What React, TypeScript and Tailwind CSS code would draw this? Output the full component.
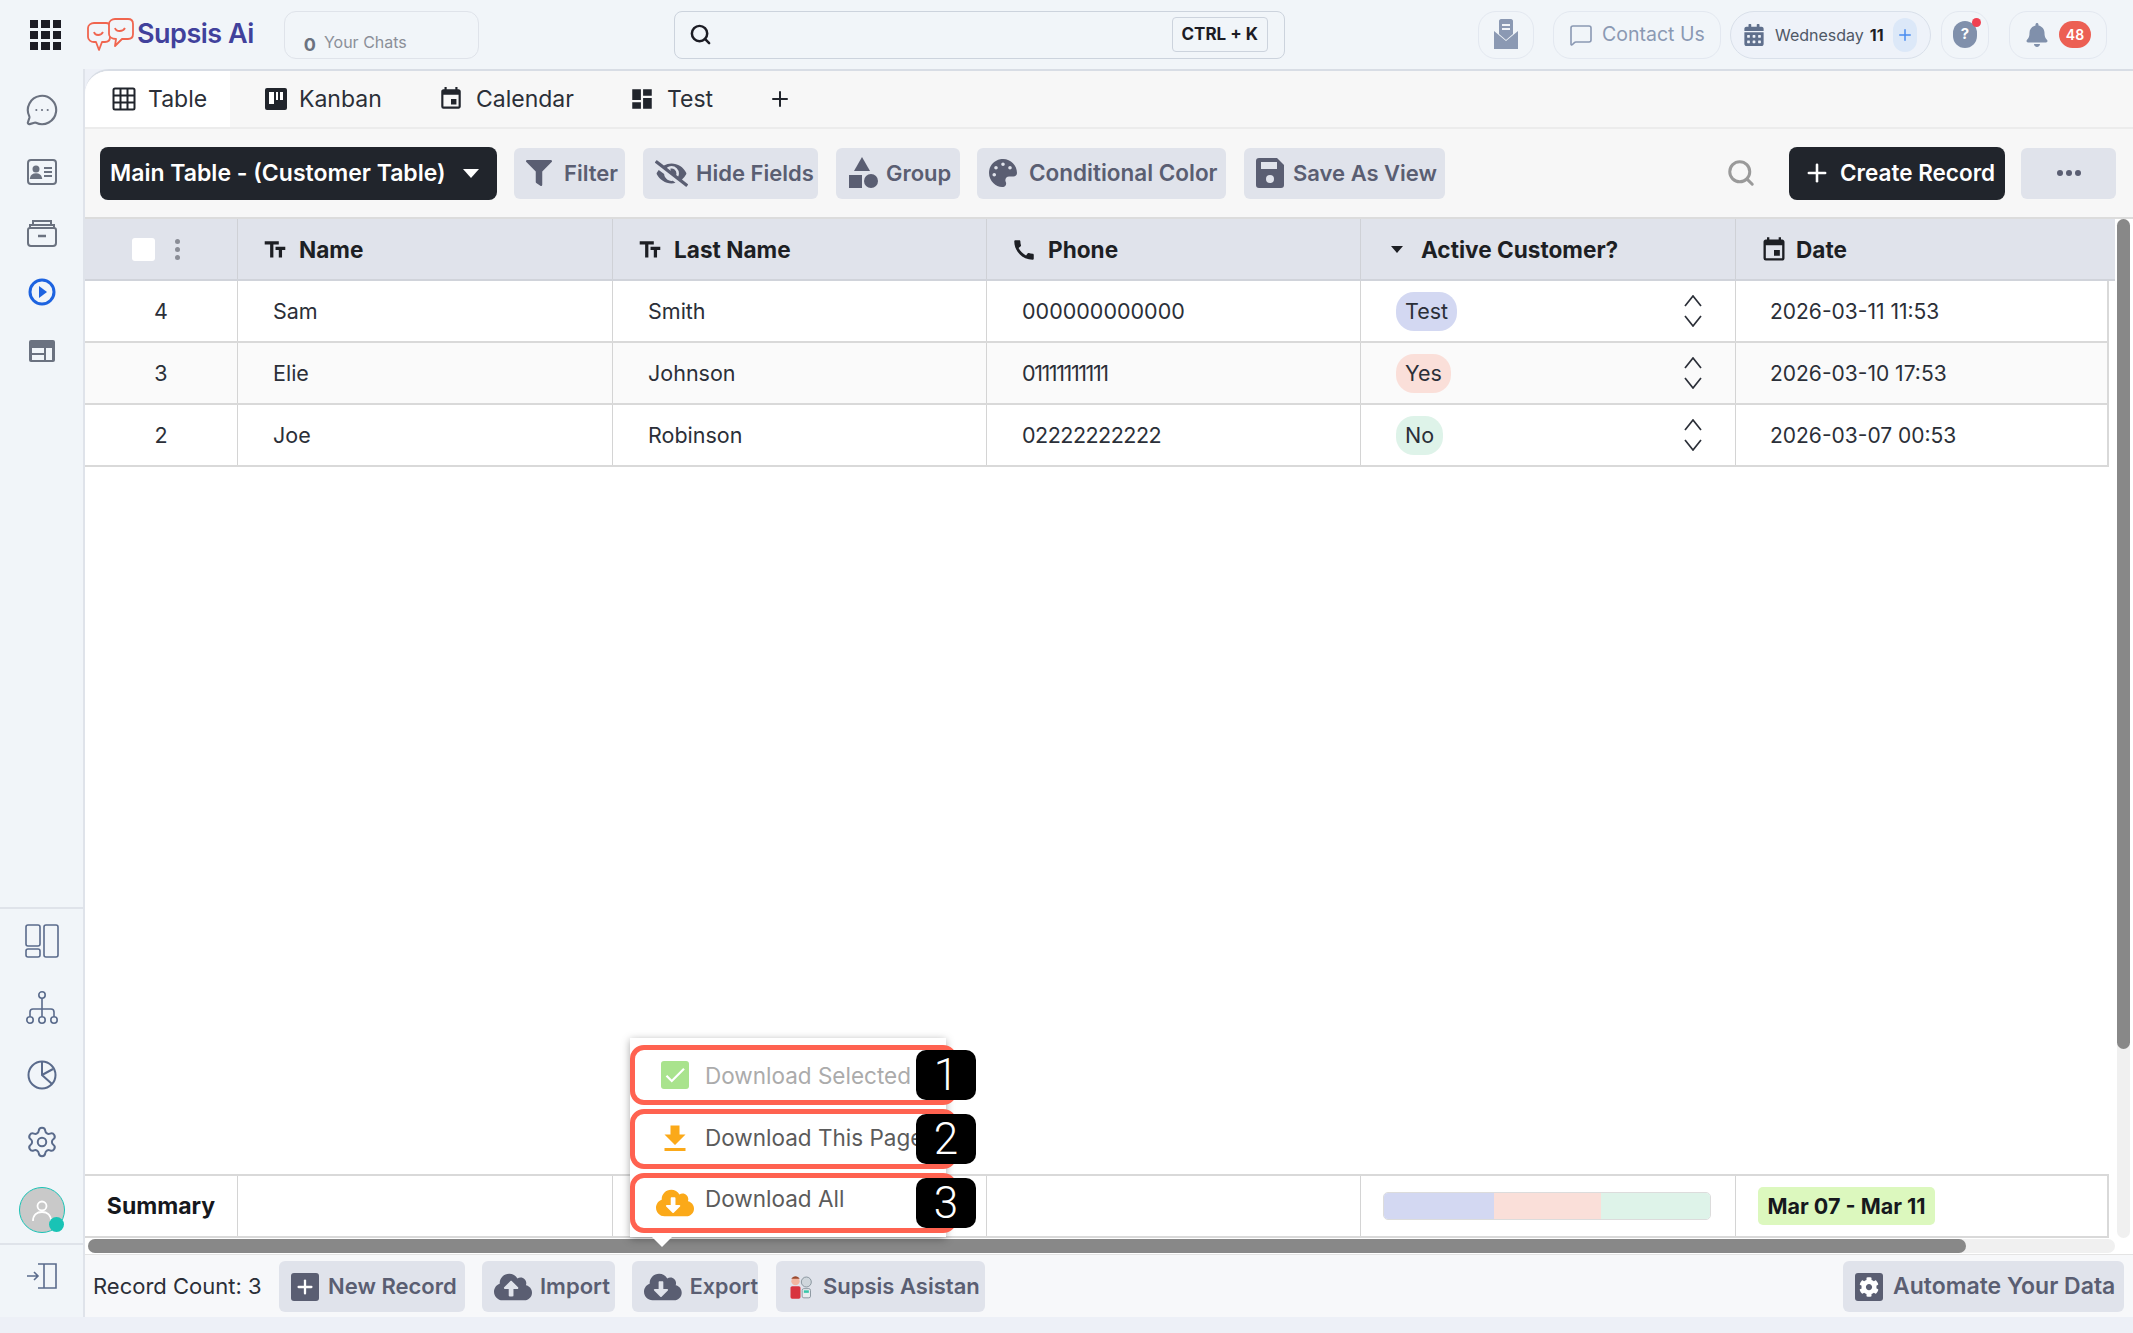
import type { ReactNode } from "react";
import { MessageCircleMore, MessageSquare, Plus, Search, Settings } from "lucide-react";
import { FaBell, FaCalendarAlt, FaCloudDownloadAlt, FaCloudUploadAlt, FaCog, FaEyeSlash, FaFilter, FaPalette } from "react-icons/fa";
import { MdCall, MdCheck, MdDashboard, MdEvent, MdFileDownload, MdTextFields } from "react-icons/md";

const font = "[font-family:Inter,'Liberation_Sans',sans-serif]";
const cols = "grid grid-cols-[152px_375px_374px_374px_375px_374px]";

function GridIcon() {
  const cells = [0, 1, 2, 3, 4, 5, 6, 7, 8];
  return (
    <div className="grid w-[31px] h-[30px] grid-cols-3 gap-[3px]">
      {cells.map((c) => (
        <div key={c} className="bg-[#1c1c24]" />
      ))}
    </div>
  );
}

function Logo() {
  return (
    <svg width="47" height="34" viewBox="0 0 47 34" fill="none" stroke="#f0654f" strokeWidth="1.8" strokeLinejoin="round">
      <path d="M7 5h12c3 0 4 2 4 4v10c0 3-2 5-5 5h-3l-3 8-3-8H7c-3 0-6-2-6-5V10c0-3 3-5 6-5z" />
      <path d="M28 1h13c3 0 5 2 5 5v10c0 3-2 5-5 5h-6l-7 7 1-7c-4 0-7-2-7-5V6c0-3 3-5 6-5z" fill="#f1f5f9" />
      <path d="M7 14c1 4 7 4 9 0M28 10c1 4 8 4 10 0" />
    </svg>
  );
}

function KanbanIcon() {
  return (
    <svg width="22" height="22" viewBox="0 0 22 22">
      <rect width="22" height="22" rx="2" fill="#21252c" />
      <rect x="4" y="4" width="5" height="12" fill="#fff" />
      <rect x="11" y="4" width="2" height="8" fill="#fff" />
      <rect x="15" y="4" width="3" height="8" fill="#fff" />
    </svg>
  );
}

function TableIcon() {
  return (
    <svg width="24" height="24" viewBox="0 0 24 24" fill="none" stroke="#21252c" strokeWidth="2">
      <rect x="1.5" y="1.5" width="21" height="21" rx="1.5" />
      <path d="M8.5 1.5v21M15.5 1.5v21M1.5 8.5h21M1.5 15.5h21" />
    </svg>
  );
}

function SortArrows() {
  return (
    <svg width="18" height="32" viewBox="0 0 18 32" fill="none" stroke="#2b2f38" strokeWidth="1.7">
      <path d="M1 11L9 1l8 10M1 21l8 10 8-10" />
    </svg>
  );
}

function Tab({ icon, label, className }: { icon: ReactNode; label: string; className: string }) {
  return (
    <div className={`flex h-full items-center gap-[12px] text-[23px] text-[#2b2f38] ${className}`}>
      {icon}
      <span>{label}</span>
    </div>
  );
}

function ToolButton({ icon, label, className, text = "text-[22px]" }: { icon: ReactNode; label: string; className: string; text?: string }) {
  return (
    <div className={`flex h-[51px] shrink-0 items-center gap-[8px] rounded-[6px] bg-[#e0e3eb] pl-[12px] font-semibold text-[#5a5e72] ${text} ${className}`}>
      {icon}
      <span className="whitespace-nowrap">{label}</span>
    </div>
  );
}

function HeadCell({ icon, label, className = "gap-[11px]" }: { icon: ReactNode; label: string; className?: string }) {
  return (
    <div className={`flex items-center border-l border-[#cfd1d6] pl-[24px] pt-[1px] text-[22.6px] font-bold text-[#1d1f24] ${className}`}>
      {icon}
      <span>{label}</span>
    </div>
  );
}

function Row({ id, first, last, phone, phoneClass, tag, tagBg, date, shade }: { id: number; first: string; last: string; phone: string; phoneClass: string; tag: string; tagBg: string; date: string; shade: string }) {
  const cell = "flex items-center border-l border-[#d4d4d4] pl-[35px]";
  return (
    <div className={`${cols} h-[62px] w-[2024px] border-b-2 border-r-2 border-[#d9d9d9] text-[21.5px] text-[#2b2f38] ${shade}`}>
      <div className="flex items-center justify-center">{id}</div>
      <div className={cell}>{first}</div>
      <div className={cell}>{last}</div>
      <div className={`${cell} ${phoneClass}`}>{phone}</div>
      <div className="flex items-center justify-between border-l border-[#d4d4d4] pl-[35px] pr-[33px]">
        <span className={`flex h-[39px] items-center rounded-[18px] px-[9px] ${tagBg}`}>{tag}</span>
        <SortArrows />
      </div>
      <div className="flex items-center border-l border-[#d4d4d4] pl-[34px] pt-[1px] text-[21px]">{date}</div>
    </div>
  );
}

function MenuBox({ num, icon, label, labelClass, muted }: { num: string; icon: ReactNode; label: string; labelClass: string; muted?: boolean }) {
  return (
    <div className="relative flex h-[60px] w-[327px] items-center rounded-[14px] border-[5px] border-[#ff6250] pl-[20px]">
      <span className="flex w-[40px] justify-center">{icon}</span>
      <span className={`ml-[10px] whitespace-nowrap text-[22.5px] ${labelClass} ${muted ? "text-[#ababab]" : "text-[#5b5b5b]"}`}>{label}</span>
      <span className="absolute left-[281px] top-[0px] flex h-[50px] w-[60px] items-center justify-center rounded-[10px] bg-black font-['Roboto',sans-serif] text-[44px] font-light text-white">{num}</span>
    </div>
  );
}

function Sidebar() {
  const stroke = { fill: "none", stroke: "#5a6b8c", strokeWidth: 1.6 };
  return (
    <aside className="flex w-[85px] shrink-0 flex-col items-center border-r-2 border-[#dfe3ea] bg-[#f1f5f9]">
      <div className="flex flex-col items-center pt-[24px] text-[#6b7280]">
        <MessageCircleMore size={34} strokeWidth={1.5} />
        <svg width="30" height="26" viewBox="0 0 30 26" fill="none" stroke="#6b7280" strokeWidth="2" className="mt-[32px]">
          <rect x="1" y="1" width="28" height="24" rx="3" />
          <circle cx="9" cy="10" r="2.5" fill="#6b7280" />
          <path d="M4 19c1-5 9-5 10 0z" fill="#6b7280" />
          <path d="M17 9h8M17 13h8M17 17h8" />
        </svg>
        <svg width="30" height="28" viewBox="0 0 30 28" fill="none" stroke="#6b7280" strokeWidth="2" className="mt-[34px]">
          <path d="M6 5V2h18v3M3 9V6h24v3M1 11c0-1 1-2 2-2h24c1 0 2 1 2 2v13c0 2-1 3-3 3H4c-2 0-3-1-3-3z" />
          <path d="M11 17h8" strokeWidth="2.5" />
        </svg>
        <svg width="28" height="28" viewBox="0 0 28 28" className="mt-[31px]">
          <circle cx="14" cy="14" r="12" fill="none" stroke="#1d63e0" strokeWidth="3" />
          <path d="M11 8l8 6-8 6z" fill="#1d63e0" />
        </svg>
        <svg width="26" height="22" viewBox="0 0 26 22" className="mt-[34px]">
          <rect width="26" height="22" rx="2" fill="#6b7280" />
          <rect x="3" y="8" width="12" height="5" fill="#f1f5f9" />
          <rect x="3" y="15" width="12" height="5" fill="#f1f5f9" />
          <rect x="17" y="8" width="6" height="12" fill="#f1f5f9" />
        </svg>
      </div>
      <div className="mt-auto flex w-full flex-col items-center border-t-2 border-[#dfe3ea] pt-[15px]">
        <div className="flex flex-col items-center gap-[33px]">
          <svg width="34" height="34" viewBox="0 0 34 34" {...stroke}>
            <rect x="1" y="1" width="14" height="21" rx="2" />
            <rect x="1" y="25" width="14" height="8" rx="2" />
            <rect x="19" y="1" width="14" height="32" rx="2" />
          </svg>
          <svg width="32" height="34" viewBox="0 0 32 34" {...stroke}>
            <circle cx="16" cy="4" r="3.2" />
            <circle cx="4" cy="29" r="3.2" />
            <circle cx="16" cy="29" r="3.2" />
            <circle cx="28" cy="29" r="3.2" />
            <path d="M16 7v18.8M4 25.8V21c0-2 1-3 3-3h18c2 0 3 1 3 3v4.8" />
          </svg>
          <svg width="34" height="34" viewBox="-2 -2 34 34" {...stroke} strokeWidth="2">
            <circle cx="15" cy="15" r="13.5" />
            <path d="M15 1.5V15l10 9M15 15l11-6" />
          </svg>
          <Settings size={34} strokeWidth={1.4} className="text-[#5a6b8c]" />
        </div>
        <div className="relative mt-[28px] flex h-[46px] w-[46px] items-center justify-center rounded-full border border-[#19c3b5] bg-[#c9c9c9]">
          <svg width="24" height="24" viewBox="0 0 24 24" fill="none" stroke="#fff" strokeWidth="1.8">
            <circle cx="12" cy="8" r="4.5" />
            <path d="M3 23c0-6 4-9 9-9s9 3 9 9" />
          </svg>
          <span className="absolute bottom-0 right-0 h-[15px] w-[15px] rounded-full bg-[#19c3b5]" />
        </div>
        <div className="mt-[10px] flex h-[74px] w-full items-start justify-center border-t-2 border-[#dfe3ea] pt-[18px]">
          <svg width="32" height="26" viewBox="0 0 32 26" {...stroke}>
            <path d="M1 13h11M8 9l4 4-4 4M12 1h6v24h-6M18 1h12v24H18" />
          </svg>
        </div>
      </div>
    </aside>
  );
}

function TopBar() {
  const pill = "flex h-[48px] items-center rounded-[18px] border border-[#e3e8f0]";
  return (
    <header className="flex h-[69px] shrink-0 items-center bg-[#f1f5f9] pl-[30px] pr-[26px]">
      <GridIcon />
      <div className="ml-[26px] flex items-center gap-[3px]">
        <Logo />
        <span className="text-[27px] font-semibold tracking-[-0.5px] text-[#41419c]">Supsis Ai</span>
      </div>
      <div className="ml-[30px] flex h-[48px] w-[195px] items-end gap-[8px] rounded-[12px] border border-[#dfe3ea] pb-[4px] pl-[19px]">
        <span className="text-[18px] font-bold leading-none text-[#6b7280]">0</span>
        <span className="pb-[4px] text-[16px] leading-none text-[#8b8f98]">Your Chats</span>
      </div>
      <div className="ml-[195px] flex h-[48px] w-[611px] items-center justify-between rounded-[8px] border border-[#ccd3dd] pl-[14px] pr-[16px]">
        <Search size={23} strokeWidth={2.6} className="text-[#1c1c24]" />
        <span className="flex h-[35px] w-[96px] items-center justify-center rounded-[4px] border border-[#ccd3dd] text-[17px] font-bold text-[#1c1c24]">CTRL + K</span>
      </div>
      <div className="ml-auto flex items-center">
        <div className={`${pill} w-[56px] justify-center`}>
          <svg width="26" height="32" viewBox="0 0 26 32">
            <path d="M1 12l12 10 12-10v18H1z" fill="#8b99b3" />
            <path d="M6 2c0-1 1-2 2-2h10c1 0 2 1 2 2v13l-7 6-7-6z" fill="#8b99b3" />
            <path d="M9 6h8M9 10h8" stroke="#f1f5f9" strokeWidth="2" />
          </svg>
        </div>
        <div className={`${pill} ml-[19px] w-[168px] gap-[9px] pl-[15px] text-[19.5px] text-[#8b99b3]`}>
          <MessageSquare size={24} strokeWidth={1.6} />
          <span>Contact Us</span>
        </div>
        <div className="ml-[9px] flex h-[48px] w-[201px] items-center rounded-[24px] border border-[#d9e0ea] bg-[#eef2f9] pl-[12px]">
          <FaCalendarAlt size={22} className="text-[#5f6f8c]" />
          <span className="ml-[10px] text-[16px] text-[#4f5866]">Wednesday</span>
          <span className="ml-[6px] text-[16px] font-bold text-[#1c1c24]">11</span>
          <span className="ml-[9px] flex h-[34px] w-[24px] items-center justify-center rounded-full bg-[#dce8f8]">
            <Plus size={18} className="text-[#4a8cf0]" />
          </span>
        </div>
        <div className={`${pill} relative ml-[10px] w-[48px] justify-center`}>
          <span className="flex h-[27px] w-[24px] items-center justify-center rounded-full bg-[#8090ab] text-[15px] font-bold text-white">?</span>
          <span className="absolute right-[7px] top-[6px] h-[9px] w-[9px] rounded-full bg-[#f04050]" />
        </div>
        <div className={`${pill} ml-[20px] w-[98px] justify-center gap-[10px]`}>
          <FaBell size={24} className="text-[#8090ab]" />
          <span className="flex h-[27px] w-[32px] items-center justify-center rounded-[14px] bg-[#ec5f53] text-[14px] font-semibold text-white">48</span>
        </div>
      </div>
    </header>
  );
}

export default function App() {
  return (
    <div className={`flex h-[1333px] w-[2133px] flex-col overflow-hidden bg-[#edf0f7] ${font}`}>
      <TopBar />
      <div className="flex h-[1248px] shrink-0">
        <Sidebar />
        <main className="flex min-w-0 flex-1 flex-col rounded-tl-[24px] border-t-2 border-[#d8dde5] bg-white">
          <div className="flex h-[58px] shrink-0 items-center rounded-tl-[24px] border-b-2 border-[#ececec] bg-[#f7f7f7]">
            <Tab icon={<TableIcon />} label="Table" className="w-[145px] rounded-tl-[24px] bg-white pl-[27px]" />
            <Tab icon={<KanbanIcon />} label="Kanban" className="w-[175px] pl-[35px]" />
            <Tab icon={<MdEvent size={26} color="#21252c" />} label="Calendar" className="w-[191px] pl-[33px] gap-[10px]" />
            <Tab icon={<MdDashboard size={26} color="#21252c" />} label="Test" className="w-[139px] pl-[33px] gap-[10px]" />
            <Plus size={24} strokeWidth={2} className="ml-[33px] text-[#21252c]" />
          </div>

          <div className="flex h-[90px] shrink-0 items-center border-b-2 border-[#dcdcdc] bg-[#f7f7f7] pl-[15px]">
            <div className="flex h-[53px] w-[397px] shrink-0 items-center justify-between rounded-[8px] bg-[#21252c] pl-[10px] pr-[18px] text-[23px] font-semibold text-white">
              <span className="whitespace-nowrap">Main Table - (Customer Table)</span>
              <svg width="16" height="9" viewBox="0 0 16 9"><path d="M0 0h16L8 9z" fill="#fff" /></svg>
            </div>
            <ToolButton icon={<FaFilter size={26} />} label="Filter" className="ml-[17px] w-[111px] gap-[12px]" />
            <ToolButton icon={<FaEyeSlash size={33} />} label="Hide Fields" className="ml-[18px] w-[175px] gap-[3px] pl-[7px]" />
            <ToolButton
              icon={
                <svg width="30" height="32" viewBox="0 0 30 32" fill="#5a5e72">
                  <path d="M14 0l8 14H6z" />
                  <rect x="1" y="18" width="13" height="13" />
                  <circle cx="23" cy="24" r="7" />
                </svg>
              }
              label="Group"
              className="ml-[18px] w-[124px] pl-[10px]"
            />
            <ToolButton icon={<FaPalette size={28} />} label="Conditional Color" className="ml-[17px] w-[249px] gap-[12px]" text="text-[22.5px]" />
            <ToolButton
              icon={
                <svg width="28" height="30" viewBox="0 0 28 30" fill="#5a5e72">
                  <path d="M3 0h18l7 7v20c0 2-1 3-3 3H3c-2 0-3-1-3-3V3c0-2 1-3 3-3z" />
                  <rect x="5" y="4" width="16" height="7" fill="#e0e3eb" />
                  <circle cx="14" cy="21" r="4" fill="#e0e3eb" />
                </svg>
              }
              label="Save As View"
              className="ml-[18px] w-[201px] gap-[9px]"
            />
            <Search size={30} strokeWidth={2.4} className="ml-[281px] text-[#9a9a9a]" />
            <div className="ml-[33px] flex h-[53px] w-[216px] shrink-0 items-center gap-[9px] rounded-[8px] bg-[#21252c] pl-[14px] text-[22.5px] font-semibold text-white">
              <Plus size={28} strokeWidth={2.2} />
              <span className="whitespace-nowrap">Create Record</span>
            </div>
            <div className="ml-[16px] flex h-[51px] w-[95px] shrink-0 items-center justify-center gap-[3px] rounded-[6px] bg-[#e0e3eb]">
              <span className="h-[6px] w-[6px] rounded-full bg-[#5a5e72]" />
              <span className="h-[6px] w-[6px] rounded-full bg-[#5a5e72]" />
              <span className="h-[6px] w-[6px] rounded-full bg-[#5a5e72]" />
            </div>
          </div>

          <div className="relative flex min-h-0 flex-1">
            <div className="flex w-[2032px] shrink-0 flex-col">
              <div className={`${cols} h-[62px] w-[2030px] shrink-0 border-b-2 border-[#d0d3da] bg-[#e0e3eb]`}>
                <div className="flex items-center pl-[47px]">
                  <span className="h-[23px] w-[23px] rounded-[3px] bg-white" />
                  <span className="ml-[20px] flex flex-col gap-[3px]">
                    <span className="h-[5px] w-[5px] rounded-full bg-[#8a8d96]" />
                    <span className="h-[5px] w-[5px] rounded-full bg-[#8a8d96]" />
                    <span className="h-[5px] w-[5px] rounded-full bg-[#8a8d96]" />
                  </span>
                </div>
                <HeadCell icon={<MdTextFields size={26} color="#1d1f24" />} label="Name" />
                <HeadCell icon={<MdTextFields size={26} color="#1d1f24" />} label="Last Name" />
                <HeadCell icon={<MdCall size={26} color="#1d1f24" />} label="Phone" />
                <HeadCell icon={<svg width="12" height="7" viewBox="0 0 12 7" className="ml-[6px] mr-[7px]"><path d="M0 0h12L6 7z" fill="#1d1f24" /></svg>} label="Active Customer?" />
                <HeadCell icon={<MdEvent size={28} color="#1d1f24" />} label="Date" className="gap-[8px]" />
              </div>
              <Row id={4} first="Sam" last="Smith" phone="000000000000" phoneClass="" tag="Test" tagBg="bg-[#d3d8f2]" date="2026-03-11 11:53" shade="bg-white" />
              <Row id={3} first="Elie" last="Johnson" phone="01111111111" phoneClass="tracking-[-1.4px]" tag="Yes" tagBg="bg-[#fadfd9]" date="2026-03-10 17:53" shade="bg-[#fafafa]" />
              <Row id={2} first="Joe" last="Robinson" phone="02222222222" phoneClass="tracking-[-0.5px]" tag="No" tagBg="bg-[#def3e9]" date="2026-03-07 00:53" shade="bg-white" />

              <div className={`${cols} mt-auto h-[64px] w-[2024px] shrink-0 border-y-2 border-r-2 border-[#d9d9d9]`}>
                <div className="flex items-center justify-center text-[23px] font-bold text-[#16181d]">Summary</div>
                <div className="border-l border-[#d4d4d4]" />
                <div className="border-l border-[#d4d4d4]" />
                <div className="border-l border-[#d4d4d4]" />
                <div className="flex items-center border-l border-[#d4d4d4] pl-[22px]">
                  <div className="flex h-[28px] w-[328px] overflow-hidden rounded-[5px] border border-[#dcdcdc]">
                    <span className="w-[110px] bg-[#d3d8f2]" />
                    <span className="w-[107px] bg-[#fadfd9]" />
                    <span className="flex-1 bg-[#def3e9]" />
                  </div>
                </div>
                <div className="flex items-center border-l border-[#d4d4d4] pl-[22px]">
                  <span className="flex h-[38px] w-[177px] items-center justify-center rounded-[5px] bg-[#dcf8be] text-[21.5px] font-bold text-[#16181d]">Mar 07 - Mar 11</span>
                </div>
              </div>
            </div>
            <div className="flex w-[13px] flex-col rounded-full bg-[#f0f0f0]">
              <div className="h-[830px] rounded-full bg-[#888]" />
            </div>
          </div>

          <div className="flex h-[17px] shrink-0 items-center border-b border-[#e4e4e4] pl-[3px] pr-[18px]">
            <div className="h-[14px] flex-1 rounded-full bg-[#f0f0f0]">
              <div className="h-[14px] w-[1878px] rounded-full bg-[#888]" />
            </div>
          </div>

          <div className="flex h-[62px] shrink-0 items-center bg-[#f7f8fa] pl-[8px] pr-[9px] pt-[1px] text-[#2b2f38]">
            <span className="w-[186px] whitespace-nowrap text-[22px]">Record Count: 3</span>
            <ToolButton
              icon={
                <span className="flex h-[28px] w-[28px] items-center justify-center rounded-[3px] bg-[#5a5e72]">
                  <Plus size={22} strokeWidth={2.5} className="text-white" />
                </span>
              }
              label="New Record"
              className="w-[186px] gap-[9px]"
            />
            <ToolButton icon={<FaCloudUploadAlt size={38} />} label="Import" className="ml-[17px] w-[133px] gap-[5px] pl-[2px]" />
            <ToolButton icon={<FaCloudDownloadAlt size={38} />} label="Export" className="ml-[17px] w-[126px] gap-[4px] pl-[2px]" text="text-[21.5px]" />
            <ToolButton
              icon={
                <svg width="25" height="30" viewBox="0 0 30 30">
                  <circle cx="9" cy="8" r="5" fill="#f2b6a0" />
                  <path d="M4 5c2-4 8-4 10 0z" fill="#9b4a2f" />
                  <rect x="3" y="14" width="12" height="15" rx="2" fill="#d8343f" />
                  <circle cx="22" cy="9" r="6" fill="#cfd6dc" stroke="#7d8a94" />
                  <rect x="17" y="17" width="10" height="11" rx="2" fill="#e8ecef" stroke="#7d8a94" />
                  <rect x="19" y="19" width="6" height="3" fill="#38c6a8" />
                </svg>
              }
              label="Supsis Asistan"
              className="ml-[18px] w-[209px] gap-[10px] pl-[5px]"
            />
            <ToolButton
              icon={
                <span className="flex h-[28px] w-[28px] items-center justify-center rounded-[3px] bg-[#5a5e72]">
                  <FaCog size={20} className="text-white" />
                </span>
              }
              label="Automate Your Data"
              className="ml-auto w-[281px] gap-[10px]"
              text="text-[23px]"
            />
          </div>
        </main>
      </div>

      <div className="absolute left-[630px] top-[1038px] flex h-[199px] w-[316px] flex-col gap-[4px] bg-white pt-[7px] shadow-[0_2px_8px_rgba(0,0,0,0.35)]">
        <MenuBox
          num="1"
          muted
          label="Download Selected"
          labelClass="pt-[1px]"
          icon={
            <span className="flex h-[28px] w-[28px] items-center justify-center rounded-[3px] bg-[#a9e38d]">
              <MdCheck size={26} className="text-white" />
            </span>
          }
        />
        <MenuBox num="2" label="Download This Page" labelClass="pb-[2px]" icon={<MdFileDownload size={36} className="text-[#fba919]" />} />
        <MenuBox num="3" label="Download All" labelClass="pb-[8px]" icon={<FaCloudDownloadAlt size={38} className="text-[#fba919]" />} />
        <span className="absolute left-[22px] top-[199px] h-0 w-0 border-x-[10px] border-t-[10px] border-x-transparent border-t-white" />
      </div>
    </div>
  );
}
